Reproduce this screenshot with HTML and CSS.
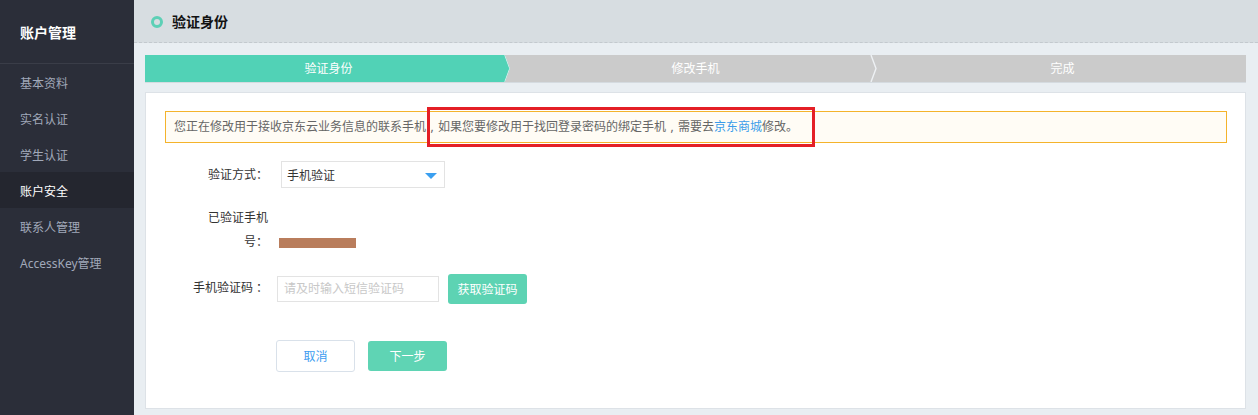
FILE: index.html
```html
<!DOCTYPE html>
<html lang="zh-CN">
<head>
<meta charset="utf-8">
<title>验证身份</title>
<link rel="stylesheet" href="styles.css">
</head>
<body>
<aside class="sidebar">
  <div class="side-title">账户管理</div>
  <ul class="side-menu">
    <li class="side-item">基本资料</li>
    <li class="side-item">实名认证</li>
    <li class="side-item">学生认证</li>
    <li class="side-item active">账户安全</li>
    <li class="side-item">联系人管理</li>
    <li class="side-item">AccessKey管理</li>
  </ul>
</aside>
<main class="main">
  <header class="header">
    <span class="dot"></span>
    <h1 class="header-title">验证身份</h1>
  </header>
  <section class="content">
    <div class="steps">
      <div class="step active">验证身份<svg class="chev" width="7" height="27" viewBox="0 0 7 27"><polyline points="1,0 6,13.5 1,27" fill="none" stroke="#eef1f4" stroke-width="1.4"/></svg></div>
      <div class="step">修改手机<svg class="chev" width="7" height="27" viewBox="0 0 7 27"><polyline points="1,0 6,13.5 1,27" fill="none" stroke="#eef1f4" stroke-width="1.4"/></svg></div>
      <div class="step">完成</div>
    </div>
    <div class="panel">
      <div class="alert">您正在修改用于接收京东云业务信息的联系手机<span class="comma">,</span>如果您要修改用于找回登录密码的绑定手机<span class="comma">,</span>需要去<a class="link">京东商城</a>修改。<span class="mark"></span></div>
      <div class="form">
        <div class="row row-select">
          <label class="label">验证方式：</label>
          <div class="select"><span>手机验证</span><i class="caret"></i></div>
        </div>
        <div class="row row-phone">
          <label class="label label-wrap">已验证手机号：</label>
          <span class="masked"></span>
        </div>
        <div class="row row-code">
          <label class="label">手机验证码 ：</label>
          <div class="input">请及时输入短信验证码</div>
          <button class="btn btn-code">获取验证码</button>
        </div>
        <div class="actions">
          <button class="btn btn-cancel">取消</button>
          <button class="btn btn-next">下一步</button>
        </div>
      </div>
    </div>
  </section>
</main>
</body>
</html>
```

FILE: styles.css
```css
* { box-sizing: border-box; }
html, body { margin: 0; padding: 0; }
body {
  display: flex;
  width: 1258px;
  height: 415px;
  overflow: hidden;
  font-family: "Noto Sans", "Noto Sans CJK SC", sans-serif;
  font-size: 12px;
  color: #333;
  background: #e9eef2;
}

/* sidebar */
.sidebar {
  width: 134px;
  flex: none;
  background: #2b2e39;
}
.side-title {
  height: 64px;
  line-height: 63px;
  padding-top: 1px;
  padding-left: 20px;
  font-size: 14px;
  font-weight: 700;
  color: #fff;
  border-bottom: 1px solid #3a3d48;
}
.side-menu { list-style: none; margin: 0; padding: 0; }
.side-item {
  height: 36px;
  line-height: 36px;
  padding-top: 2px;
  padding-left: 20px;
  color: #a1a9ba;
  font-size: 12px;
}
.side-item.active { background: #24262f; color: #fff; }

/* main */
.main { flex: 1; display: flex; flex-direction: column; }
.header {
  height: 43px;
  flex: none;
  display: flex;
  align-items: center;
  padding-left: 17px;
  padding-top: 1px;
  background: #d7dde1;
  border-bottom: 1px dashed #c3c9ce;
}
.dot {
  width: 12px;
  height: 12px;
  border: 3px solid #5dd0b6;
  border-radius: 50%;
  margin-right: 9px;
}
.header-title {
  margin: 0;
  font-size: 14px;
  font-weight: 700;
  color: #111;
  line-height: 20px;
}
.content { padding: 12px 12px 0 11px; }

/* steps */
.steps {
  display: flex;
  height: 28px;
  background: #cbcbcb;
  border-bottom: 1px solid #d5dbe0;
}
.step {
  position: relative;
  flex: 1;
  text-align: center;
  line-height: 27px;
  color: #fff;
  font-size: 12px;
}
.step.active {
  background: #51d2b6;
  clip-path: polygon(0 0, calc(100% - 7px) 0, calc(100% - 2px) 50%, calc(100% - 7px) 100%, 0 100%);
}
.chev { position: absolute; right: 2px; top: 0; }
.step.active .chev { right: 1px; }

/* panel */
.panel {
  margin-top: 9px;
  height: 317px;
  background: #fff;
  border: 1px solid #dde2e7;
  padding: 18px 18px 0 19px;
}
.alert {
  position: relative;
  height: 32px;
  line-height: 30px;
  padding-left: 8px;
  color: #666;
  background: #fffcf5;
  border: 1px solid #f4b32b;
}
.comma {
  display: inline-block;
  width: 12px;
  text-align: center;
}
.link { color: #3a9cea; }
.mark {
  position: absolute;
  left: 261px;
  top: -5px;
  width: 388px;
  height: 40px;
  border: 3px solid #e41f26;
}

/* form */
.form { padding-left: 23px; }
.row { display: flex; align-items: center; }
.label {
  width: 80px;
  flex: none;
  text-align: right;
  color: #333;
  line-height: 27px;
}
.row-select { margin-top: 18px; }
.select {
  margin-left: 13px;
  width: 164px;
  height: 27px;
  border: 1px solid #e3e3e3;
  display: flex;
  align-items: center;
  justify-content: space-between;
  padding: 0 7px 0 5px;
  color: #333;
}
.caret {
  width: 0;
  height: 0;
  border-left: 6px solid transparent;
  border-right: 6px solid transparent;
  border-top: 6px solid #3a9ff0;
  margin-top: 2px;
}
.row-phone { margin-top: 18px; align-items: flex-end; }
.label-wrap { line-height: 24px; }
.masked {
  margin-left: 11px;
  margin-bottom: 6px;
  width: 77px;
  height: 10px;
  background: #b97d5c;
}
.row-code { margin-top: 20px; }
.row-code .label { line-height: 26px; margin-top: -2px; }
.input {
  margin-left: 9px;
  width: 162px;
  height: 26px;
  margin-top: -1px;
  border: 1px solid #e3e3e3;
  line-height: 24px;
  padding-left: 6px;
  color: #c8c8c8;
}
.btn {
  font-family: inherit;
  font-size: 12px;
  border-radius: 3px;
  cursor: pointer;
  padding: 0;
}
.btn-code {
  margin-left: 9px;
  width: 79px;
  height: 30px;
  border: none;
  background: #5dd3b3;
  color: #fff;
}
.actions {
  display: flex;
  align-items: center;
  margin-top: 36px;
  padding-left: 88px;
}
.btn-cancel {
  width: 79px;
  height: 32px;
  background: #fff;
  border: 1px solid #d9e1ea;
  color: #3d9cf0;
}
.btn-next {
  margin-left: 13px;
  width: 79px;
  height: 30px;
  border: none;
  background: #5fd4b4;
  color: #fff;
}
```
